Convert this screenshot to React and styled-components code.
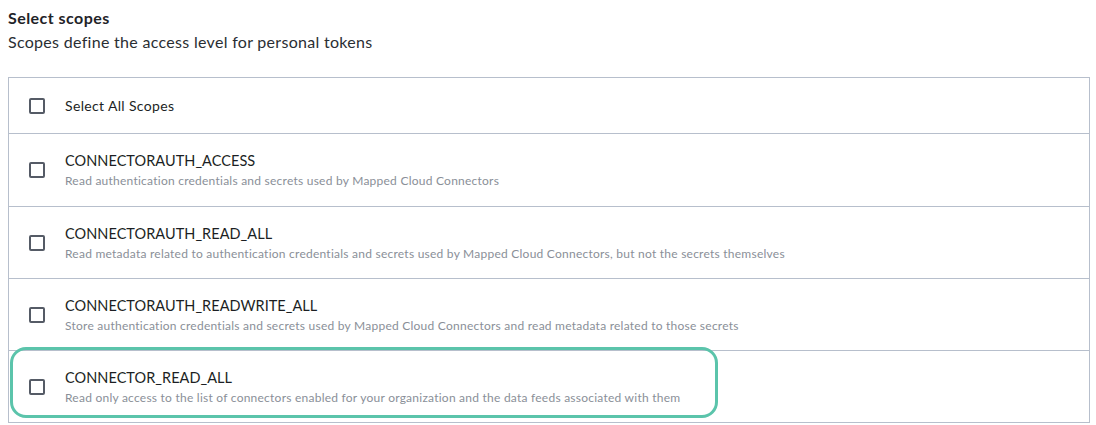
import React, { useState } from 'react';
import styled, { createGlobalStyle } from 'styled-components';

const GlobalStyle = createGlobalStyle`
  body {
    margin: 0;
    background: #fff;
    font-family: Lato, "Open Sans", sans-serif;
    color: #1f2328;
  }
`;

const Page = styled.div`
  padding: 8px 6px 0 8px;
  width: 1096px;
  box-sizing: border-box;
`;

const Heading = styled.h3`
  margin: 0;
  font-size: 16px;
  font-weight: 700;
  line-height: 20px;
  letter-spacing: 0.45px;
`;

const Sub = styled.p`
  margin: 2px 0 0;
  font-size: 16px;
  line-height: 24px;
  letter-spacing: 0.3px;
  color: #2a2e33;
`;

const Table = styled.div`
  position: relative;
  margin-top: 23px;
  border: 1px solid #b7bfcc;
  border-bottom: none;
  width: 1082px;
  box-sizing: border-box;
`;

const Row = styled.label`
  display: flex;
  align-items: center;
  gap: 20px;
  height: ${p => p.$h}px;
  padding-left: 20px;
  border-bottom: 1px solid #b7bfcc;
  box-sizing: border-box;
  cursor: pointer;
`;

const Box = styled.span`
  width: 16px;
  height: 16px;
  box-sizing: border-box;
  border: 2px solid #555b66;
  border-radius: 2px;
  flex-shrink: 0;
  background: ${p => (p.$on ? '#555b66' : '#fff')};
`;

const Texts = styled.div`
  display: flex;
  flex-direction: column;
  margin-top: 1px;
`;

const Name = styled.span`
  font-size: ${p => (p.$head ? 14 : 14.5)}px;
  line-height: 18px;
  color: #1c1f24;
  letter-spacing: ${p => (p.$head ? 0.35 : 0.05)}px;
`;

const Desc = styled.span`
  font-size: 12px;
  line-height: 16px;
  color: #8a8f98;
  letter-spacing: 0.24px;
  margin-top: 3px;
`;

const Highlight = styled.div`
  position: absolute;
  left: 1px;
  top: 269px;
  width: 708px;
  height: 71px;
  border: 3px solid #5bc4ab;
  border-radius: 16px;
  box-sizing: border-box;
  pointer-events: none;
`;

const scopes = [
  {
    name: 'CONNECTORAUTH_ACCESS',
    desc: 'Read authentication credentials and secrets used by Mapped Cloud Connectors',
  },
  {
    name: 'CONNECTORAUTH_READ_ALL',
    desc: 'Read metadata related to authentication credentials and secrets used by Mapped Cloud Connectors, but not the secrets themselves',
  },
  {
    name: 'CONNECTORAUTH_READWRITE_ALL',
    desc: 'Store authentication credentials and secrets used by Mapped Cloud Connectors and read metadata related to those secrets',
  },
  {
    name: 'CONNECTOR_READ_ALL',
    desc: 'Read only access to the list of connectors enabled for your organization and the data feeds associated with them',
  },
];

function App() {
  const [checked, setChecked] = useState({});
  const toggle = k => setChecked(c => ({ ...c, [k]: !c[k] }));

  return (
    <Page>
      <GlobalStyle />
      <Heading>Select scopes</Heading>
      <Sub>Scopes define the access level for personal tokens</Sub>
      <Table>
        <Row $h={56} onClick={() => toggle('all')}>
          <Box $on={checked.all} />
          <Texts>
            <Name $head>Select All Scopes</Name>
          </Texts>
        </Row>
        {scopes.map((s, i) => (
          <Row key={s.name} $h={i === 0 ? 73 : 72} onClick={() => toggle(s.name)}>
            <Box $on={checked[s.name]} />
            <Texts>
              <Name>{s.name}</Name>
              <Desc>{s.desc}</Desc>
            </Texts>
          </Row>
        ))}
        <Highlight />
      </Table>
    </Page>
  );
}

export default App;
